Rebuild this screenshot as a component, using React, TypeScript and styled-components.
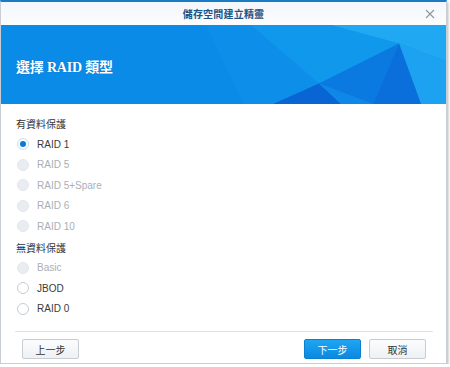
import React from 'react';
import styled, { createGlobalStyle, css } from 'styled-components';

const GlobalStyle = createGlobalStyle`
	html, body {
		margin: 0;
		padding: 0;
		background: #ffffff;
	}
	body {
		font-family: 'Liberation Sans', 'Noto Sans CJK TC', sans-serif;
		color: #333;
	}
`;

const Window = styled.div`
	width: 447px;
	height: 364px;
	box-sizing: border-box;
	border: 1px solid #c9ced4;
	border-top: 2px solid #1b7cc6;
	box-shadow: 1px 2px 3px rgba(0, 0, 0, 0.3);
	background: #fff;
	display: flex;
	flex-direction: column;
	overflow: hidden;
`;

const TitleBar = styled.div`
	height: 23px;
	flex: none;
	position: relative;
	display: flex;
	align-items: center;
	justify-content: center;
	background: linear-gradient(#f3f7fb, #fbfcfe);
	font-family: 'Noto Sans CJK TC', sans-serif;
	font-size: 10px;
	font-weight: bold;
	color: #1d5485;
	letter-spacing: 0.2px;
`;

const Close = styled.svg`
	position: absolute;
	right: 11px;
	top: 7px;
`;

const Banner = styled.div`
	height: 77px;
	flex: none;
	position: relative;
	background: #0a8be8;
	display: flex;
	align-items: center;
	padding-left: 15px;
	padding-top: 2px;
`;

const BannerArt = styled.svg`
	position: absolute;
	inset: 0;
	width: 100%;
	height: 100%;
`;

const BannerTitle = styled.h1`
	position: relative;
	margin: 0;
	font-family: 'Liberation Serif', 'Noto Sans CJK TC', serif;
	font-size: 14px;
	font-weight: bold;
	color: #fff;
	letter-spacing: -0.2px;
	text-shadow: 0 0 1px rgba(0, 40, 120, 0.4);
`;

const Body = styled.div`
	flex: 1;
	min-height: 0;
	padding: 10px 13px 0 14px;
	display: flex;
	flex-direction: column;
`;

const GroupLabel = styled.div<{ gap?: number }>`
	height: 20px;
	line-height: 20px;
	flex: none;
	margin-top: ${({ gap }) => gap ?? 0}px;
	font-family: 'Noto Sans CJK TC', sans-serif;
	font-size: 10px;
	color: #333;
	padding-left: 1px;
`;

const Option = styled.label<{ disabled?: boolean }>`
	height: 20.5px;
	flex: none;
	display: flex;
	align-items: center;
	gap: 8px;
	padding-left: 2px;
	font-size: 10px;
	color: ${({ disabled }) => (disabled ? '#a9afb6' : '#3a3a3a')};
`;

const Radio = styled.span<{ checked?: boolean; disabled?: boolean }>`
	width: 12px;
	height: 12px;
	box-sizing: border-box;
	border-radius: 50%;
	flex: none;
	display: flex;
	align-items: center;
	justify-content: center;
	border: 1px solid #c6ccd3;
	background: #fff;
	${({ disabled }) =>
		disabled &&
		css`
			border-color: #e3e7eb;
			background: #e9ecf0;
		`}
	${({ checked }) =>
		checked &&
		css`
			border-color: #bfe0f7;
			&::after {
				content: '';
				width: 6px;
				height: 6px;
				border-radius: 50%;
				background: #0e7ad4;
			}
		`}
`;

const Footer = styled.div`
	margin-top: auto;
	flex: none;
	border-top: 1px solid #dfe3e7;
	height: 32px;
	box-sizing: border-box;
	display: flex;
	align-items: flex-start;
	padding: 7px 7px 0 7px;
`;

const Button = styled.button<{ primary?: boolean }>`
	width: 57px;
	height: 20px;
	padding: 0;
	border-radius: 2px;
	font-family: 'Noto Sans CJK TC', sans-serif;
	font-size: 10px;
	cursor: pointer;
	${({ primary }) =>
		primary
			? css`
					border: 1px solid #0b7fd0;
					background: linear-gradient(#1ea6f2, #0c88e2);
					color: #fff;
			  `
			: css`
					border: 1px solid #c8cdd3;
					background: linear-gradient(#fbfcfd, #eef1f4);
					color: #333;
			  `}
`;

const Spacer = styled.div`
	flex: 1;
`;

const Gap = styled.div`
	width: 8px;
`;

const withProtection = [
	{ name: 'RAID 1', checked: true },
	{ name: 'RAID 5', disabled: true },
	{ name: 'RAID 5+Spare', disabled: true },
	{ name: 'RAID 6', disabled: true },
	{ name: 'RAID 10', disabled: true },
];

const noProtection = [
	{ name: 'Basic', disabled: true },
	{ name: 'JBOD' },
	{ name: 'RAID 0' },
];

type Item = { name: string; checked?: boolean; disabled?: boolean };

const Options = ({ items }: { items: Item[] }) => (
	<>
		{items.map((it) => (
			<Option key={it.name} disabled={it.disabled}>
				<Radio checked={it.checked} disabled={it.disabled} />
				{it.name}
			</Option>
		))}
	</>
);

export default function App() {
	return (
		<>
			<GlobalStyle />
			<Window>
				<TitleBar>
					儲存空間建立精靈
					<Close width='10' height='10' viewBox='0 0 10 10'>
						<path d='M1 1L9 9M9 1L1 9' stroke='#8c979f' strokeWidth='1.1' />
					</Close>
				</TitleBar>
				<Banner>
					<BannerArt viewBox='0 0 445 77' preserveAspectRatio='none'>
						<polygon points='205,0 445,0 445,77 243,77' fill='#1495ec' opacity='0.35' />
						<polygon points='330,0 445,0 445,35 398,18' fill='#2bb3f6' opacity='0.7' />
						<polygon points='398,18 445,35 445,77 420,77' fill='#22a6f2' opacity='0.8' />
						<polygon points='250,0 330,0 398,18 318,57' fill='#14a0f0' opacity='0.55' />
						<polygon points='318,57 398,18 372,77' fill='#0a76dd' opacity='0.8' />
						<polygon points='398,18 420,77 372,77' fill='#0a6ad8' opacity='0.85' />
						<polygon points='272,77 318,57 340,77' fill='#095fd2' opacity='0.9' />
						<polygon points='318,57 372,77 340,77' fill='#0f86e6' opacity='0.8' />
					</BannerArt>
					<BannerTitle>選擇 RAID 類型</BannerTitle>
				</Banner>
				<Body>
					<GroupLabel>有資料保護</GroupLabel>
					<Options items={withProtection} />
					<GroupLabel gap={1}>無資料保護</GroupLabel>
					<Options items={noProtection} />
					<Footer>
						<Button>上一步</Button>
						<Spacer />
						<Button primary>下一步</Button>
						<Gap />
						<Button>取消</Button>
					</Footer>
				</Body>
			</Window>
		</>
	);
}
